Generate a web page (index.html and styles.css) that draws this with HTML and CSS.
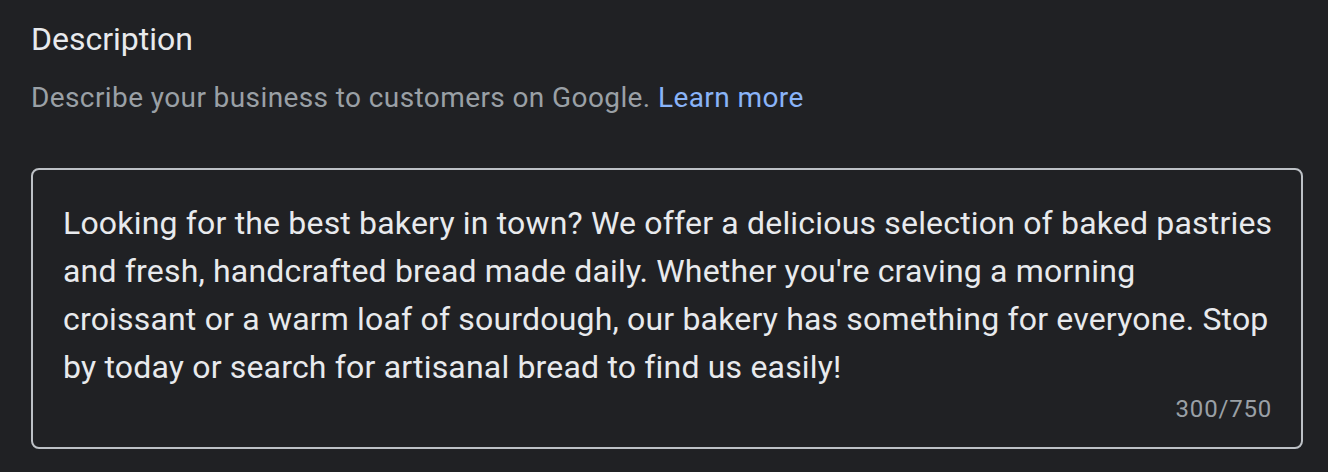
FILE: index.html
```html
<!DOCTYPE html>
<html>
<head>
<meta charset="utf-8">
<link rel="stylesheet" href="styles.css">
</head>
<body>
<div class="section">
  <h2 class="title">Description</h2>
  <p class="subtitle">Describe your business to customers on Google. <a class="link" href="#">Learn more</a></p>
  <div class="field">
    <p class="field-text">Looking for the best bakery in town? We offer a delicious selection of baked pastries and fresh, handcrafted bread made daily. Whether you're craving a morning croissant or a warm loaf of sourdough, our bakery has something for everyone. Stop by today or search for artisanal bread to find us easily!</p>
    <div class="counter">300/750</div>
  </div>
</div>
</body>
</html>
```
FILE: styles.css
```css
html, body {
  margin: 0;
  padding: 0;
  background: #202124;
  font-family: Roboto, "Liberation Sans", Arial, sans-serif;
}
.section {
  padding: 19px 25px 0 31px;
}
.title {
  margin: 0;
  font-size: 32px;
  font-weight: 400;
  line-height: 40px;
  color: #e8eaed;
}
.subtitle {
  margin: 19px 0 0;
  font-size: 28px;
  line-height: 40px;
  letter-spacing: 0.4px;
  color: #9aa0a6;
}
.link {
  color: #8ab4f8;
  text-decoration: none;
}
.field {
  margin-top: 50px;
  border: 2px solid #bdc1c6;
  border-radius: 8px;
  padding: 29px 26px 22px 30px;
}
.field-text {
  margin: 0;
  font-size: 32px;
  line-height: 48px;
  letter-spacing: 0.18px;
  color: #e8eaed;
}
.counter {
  margin: 2px 3px 0 0;
  text-align: right;
  font-size: 24px;
  line-height: 32px;
  letter-spacing: 0.8px;
  color: #9aa0a6;
}
```
